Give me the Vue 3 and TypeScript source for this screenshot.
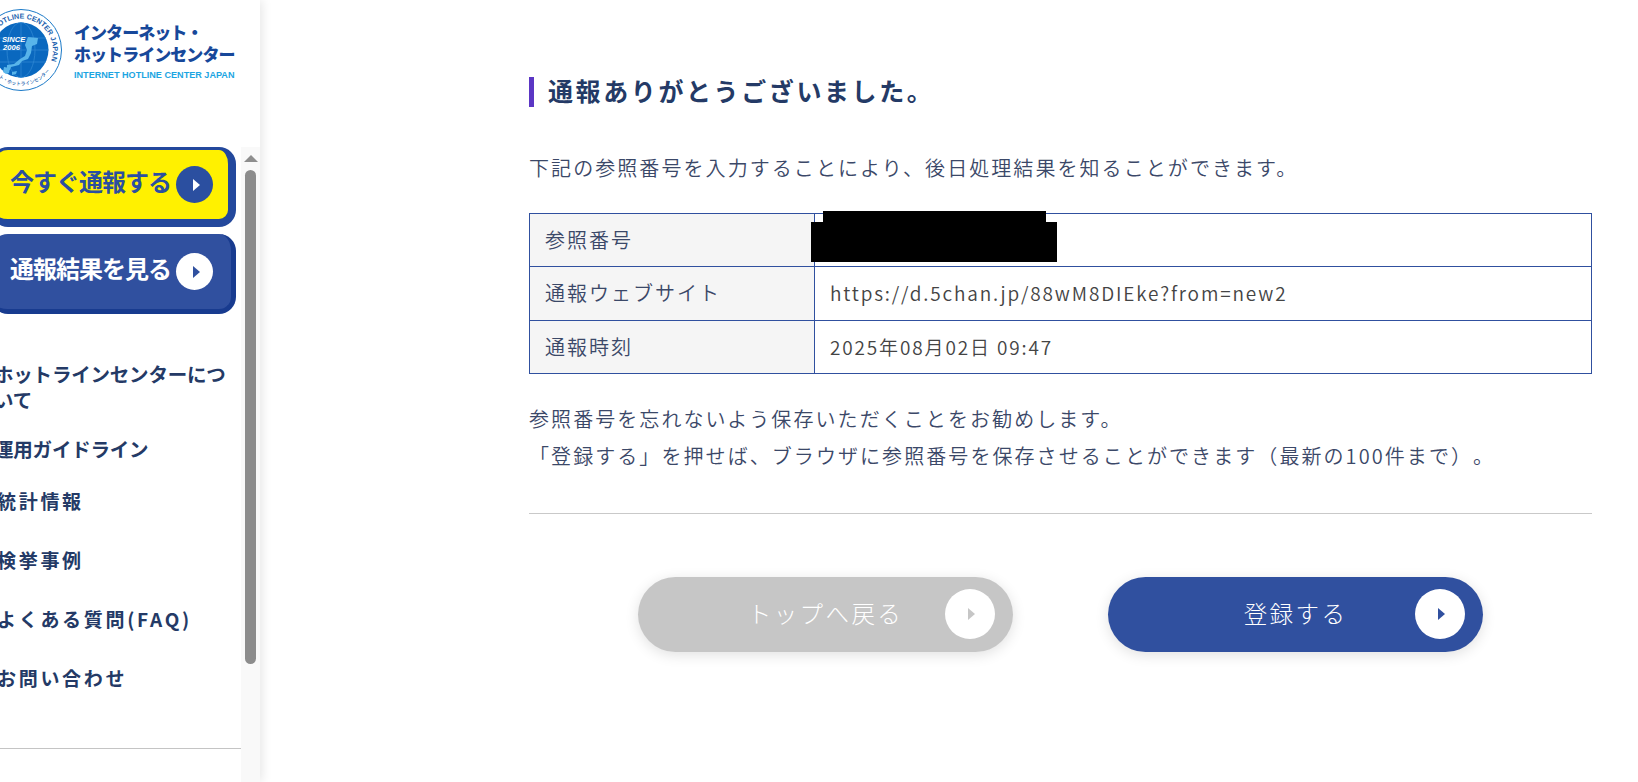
<script setup lang="ts">
interface NavItem { label: string; wide: boolean; height: number }
const navItems: NavItem[] = [
  { label: 'ホットラインセンターについて', wide: false, height: 75 },
  { label: '運用ガイドライン', wide: false, height: 52 },
  { label: '統計情報', wide: true, height: 59 },
  { label: '検挙事例', wide: true, height: 59 },
  { label: 'よくある質問(FAQ)', wide: true, height: 59 },
  { label: 'お問い合わせ', wide: true, height: 57 }
]
const rows = [
  { head: '参照番号', value: '', redacted: true },
  { head: '通報ウェブサイト', value: 'https://d.5chan.jp/88wM8DIEke?from=new2', redacted: false },
  { head: '通報時刻', value: '2025年08月02日 09:47', redacted: false }
]
</script>

<template>
  <div class="page">
    <aside class="side">
      <div class="logo">
        <svg class="seal" viewBox="0 0 84 84" width="84" height="84">
          <defs>
            <path id="sealTop" d="M11.3 50.5 A31.8 31.8 0 1 1 72 53" />
            <path id="sealBottom" d="M6.5 42 A35.5 35.5 0 0 0 77.5 42" />
          </defs>
          <circle cx="42" cy="42" r="40.5" fill="#fff" stroke="#1b7ac8" stroke-width="1" />
          <circle cx="42" cy="42" r="27.5" fill="#0a68bf" />
          <g fill="none" stroke="#2f86d2" stroke-width=".8">
            <ellipse cx="42" cy="42" rx="14" ry="27.5" />
            <path d="M42 14.5V69.5M14.500 42H69.5M17 30H67M17 54H67" />
          </g>
          <path fill="#58b4ea" d="M49 29l10 1-1 6-5 2-1 7-3 6-6 2-3 4-8 2-1 3-3-1v-4l7-1 6-5 5-3 2-6-2-5zM25 59l6 1-1 5-3 1-3-2zM33 64l5-1-1 3-4 1z" />
          <text x="23" y="34" class="since">SINCE</text>
          <text x="24" y="41.5" class="since">2006</text>
          <text class="ring"><textPath href="#sealTop" startOffset="100%" text-anchor="end">HOTLINE CENTER JAPAN</textPath></text>
          <text class="ring small"><textPath href="#sealBottom" startOffset="80%" text-anchor="end">インターネット・ホットラインセンター</textPath></text>
        </svg>
        <div class="logo-text">
          <div class="logo-ja">インターネット・<br />ホットラインセンター</div>
          <div class="logo-en">INTERNET HOTLINE CENTER JAPAN</div>
        </div>
      </div>

      <div class="side-body">
        <div class="side-scroll">
          <a class="cta cta-yellow">
            <span>今すぐ通報する</span>
            <i class="dot dot-blue"><b class="tri tri-white"></b></i>
          </a>
          <a class="cta cta-blue">
            <span>通報結果を見る</span>
            <i class="dot dot-white"><b class="tri tri-blue"></b></i>
          </a>
          <ul class="nav">
            <li
              v-for="item in navItems"
              :key="item.label"
              :class="{ wide: item.wide }"
              :style="{ height: item.height + 'px' }"
            >{{ item.label }}</li>
          </ul>
          <hr class="side-rule" />
        </div>
        <div class="scrollbar">
          <div class="sb-arrow"></div>
          <div class="sb-thumb"></div>
        </div>
      </div>
    </aside>

    <main class="main">
      <h1 class="title">通報ありがとうございました。</h1>
      <p class="lead">下記の参照番号を入力することにより、後日処理結果を知ることができます。</p>

      <table class="info">
        <tbody>
          <tr v-for="row in rows" :key="row.head">
            <th>{{ row.head }}</th>
            <td :class="{ hidden: row.redacted }">
              <template v-if="row.redacted">
                <span class="mask mask-a"></span>
                <span class="mask mask-b"></span>
              </template>
              <template v-else>{{ row.value }}</template>
            </td>
          </tr>
        </tbody>
      </table>

      <p class="note">参照番号を忘れないよう保存いただくことをお勧めします。<br />「登録する」を押せば、ブラウザに参照番号を保存させることができます（最新の100件まで）。</p>

      <hr class="rule" />

      <div class="actions">
        <button class="pill pill-gray" type="button">
          トップへ戻る
          <i class="pill-dot"><b class="tri tri-gray"></b></i>
        </button>
        <button class="pill pill-blue" type="button">
          登録する
          <i class="pill-dot"><b class="tri tri-blue"></b></i>
        </button>
      </div>
    </main>
  </div>
</template>

<style>
html, body { margin: 0; background: #fff; overflow: hidden; }
</style>

<style scoped>
.page {
  display: flex;
  height: 782px;
  overflow: hidden;
  font-family: "Noto Sans CJK JP", "Noto Sans", sans-serif;
  color: #3b4868;
  text-spacing-trim: space-all;
}
.side {
  flex: 0 0 260px;
  height: 782px;
  display: flex;
  flex-direction: column;
  background: #fff;
  box-shadow: 2px 0 10px rgba(0, 0, 0, .1);
  position: relative;
}
.logo {
  flex: 0 0 147px;
  display: flex;
  align-items: flex-start;
  overflow: hidden;
}
.seal { flex: none; margin: 8px 0 0 -21px; }
.since { font: italic bold 7.6px "Liberation Sans", sans-serif; fill: #fff; }
.ring { font: bold 7.2px "Liberation Sans", sans-serif; fill: #1b5fae; }
.ring.small { font: 500 4.8px "Noto Sans CJK JP", sans-serif; }
.logo-text { margin: 21px 0 0 11px; white-space: nowrap; }
.logo-ja {
  font-size: 17px;
  line-height: 22px;
  font-weight: 900;
  color: #17489a;
  letter-spacing: -.95px;
}
.logo-en {
  margin-top: 4px;
  font: 700 9.1px/13px "Liberation Sans", sans-serif;
  color: #1ca5e2;
}
.side-body { flex: 1; display: flex; min-height: 0; }
.side-scroll { flex: 0 0 241px; width: 241px; overflow: hidden; }
.cta {
  box-sizing: border-box;
  display: flex;
  align-items: center;
  width: 245px;
  height: 80px;
  margin-left: -9px;
  padding-left: 19px;
  border-radius: 17px;
  border-style: solid;
  font-size: 24px;
  font-weight: 700;
  letter-spacing: -1px;
  white-space: nowrap;
}
.cta span { width: 160px; margin-bottom: 8px; }
.cta-yellow {
  padding-left: 16px;
  background: #fff100;
  border-color: #23489c;
  border-width: 3px 8px 8px 3px;
  color: #2b4fa0;
}
.cta-blue {
  margin-top: 7px;
  background: #30509f;
  border-color: #183b8f;
  border-width: 0 5px 5px 0;
  color: #fff;
}
.dot {
  flex: none;
  width: 37px;
  height: 37px;
  margin-left: 6px;
  border-radius: 50%;
  display: flex;
  align-items: center;
  justify-content: center;
}
.dot-blue { background: #2b4fa0; }
.dot-white { background: #fff; }
.tri {
  display: block;
  width: 0;
  height: 0;
  border-style: solid;
  border-width: 6px 0 6px 7px;
  border-color: transparent;
  margin-left: 3px;
}
.tri-white { border-left-color: #fff; }
.tri-blue { border-left-color: #30509f; }
.tri-gray { border-left-color: #c6c6c6; }
.nav { list-style: none; margin: 47px 0 0 -3px; padding: 0; color: #243a66; }
.nav li {
  box-sizing: border-box;
  width: 234px;
  margin-left: -3px;
  font-size: 19.5px;
  line-height: 26px;
  font-weight: 700;
  letter-spacing: -.2px;
}
.nav li.wide { margin-left: 0; font-size: 19px; letter-spacing: 2.7px; }
.side-rule { border: 0; border-top: 1px solid #c4c4c4; margin: 26px 0 0; }
.scrollbar {
  flex: 0 0 19px;
  background: #f9f9f9;
  display: flex;
  flex-direction: column;
  align-items: center;
  padding-top: 8px;
  box-sizing: border-box;
}
.sb-arrow {
  width: 0;
  height: 0;
  border-style: solid;
  border-width: 0 7px 7px;
  border-color: transparent transparent #8e8e8e;
}
.sb-thumb {
  width: 11px;
  height: 494px;
  margin-top: 8px;
  background: #8c8c8c;
  border-radius: 6px;
}
.main {
  flex: 0 0 1063px;
  margin-left: 269px;
  padding-top: 77px;
}
.title {
  margin: 0;
  height: 30px;
  border-left: 5px solid #5b36c4;
  padding-left: 14px;
  font-size: 25px;
  line-height: 26px;
  font-weight: 700;
  letter-spacing: 2.6px;
  color: #243a66;
}
.lead {
  margin: 43px 0 0;
  font-size: 20px;
  font-weight: 350;
  line-height: 36px;
  letter-spacing: 2.07px;
}
.info {
  width: 1063px;
  margin-top: 27px;
  border-collapse: collapse;
  table-layout: fixed;
  font-size: 19px;
  font-weight: 350;
  letter-spacing: 1.85px;
  color: #444;
}
.info th, .info td {
  border: 1px solid #30509f;
  height: 53px;
  padding: 0 15px 2px;
  box-sizing: border-box;
  text-align: left;
  font-weight: 350;
}
.info tr:nth-child(2) th, .info tr:nth-child(2) td { height: 54px; }
.info th { width: 285px; background: #f5f5f5; font-size: 20px; letter-spacing: 2px; color: #3b4868; }
.info td.hidden { position: relative; }
.mask { position: absolute; background: #000; }
.mask-a { left: 8px; top: -3px; width: 223px; height: 11px; }
.mask-b { left: -4px; top: 8px; width: 246px; height: 40px; }
.note {
  margin: 26px 0 0;
  font-size: 20px;
  font-weight: 350;
  line-height: 37px;
  letter-spacing: 2.07px;
}
.rule { border: 0; border-top: 1px solid #c9c9c9; margin: 39px 0 0; }
.actions {
  display: flex;
  justify-content: center;
  gap: 95px;
  margin-top: 63px;
}
.pill {
  position: relative;
  flex: none;
  width: 375px;
  height: 75px;
  padding-bottom: 5px;
  border: 0;
  border-radius: 38px;
  font-family: inherit;
  font-size: 23.5px;
  font-weight: 300;
  letter-spacing: 2.4px;
  color: #fff;
  box-shadow: 0 3px 14px rgba(0, 0, 0, .12);
}
.pill-gray { background: #c6c6c6; }
.pill-blue { background: #30509f; }
.pill-dot {
  position: absolute;
  right: 18px;
  top: 12px;
  width: 50px;
  height: 50px;
  border-radius: 50%;
  background: #fff;
  display: flex;
  align-items: center;
  justify-content: center;
}
</style>
